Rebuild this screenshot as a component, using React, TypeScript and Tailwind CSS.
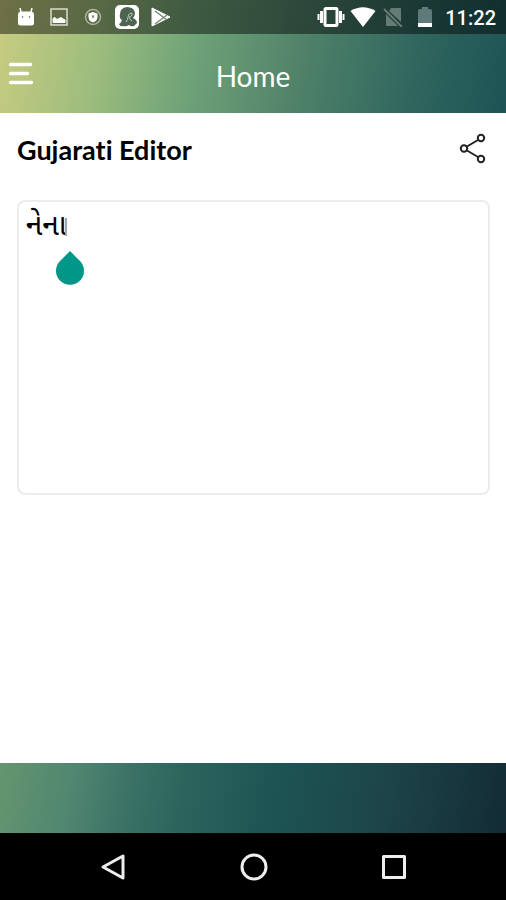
import { useState } from 'react';

function StatusBar() {
  return (
    <div className="flex h-[34px] items-center justify-between bg-black/45 pr-[10px] pl-[17px] text-white">
      <div className="flex items-center gap-[14px]">
        <svg className="h-5 w-[18px]" viewBox="0 0 18 20" fill="currentColor">
          <path d="M1 7.5Q1 5 3.5 4.5h11Q17 5 17 7.5V16q0 2.500-2.500 2.500h-11Q1 18.500 1 16z" />
          <path d="M4 5 3 1M14 5l1-4" stroke="currentColor" strokeWidth="1.500" />
          <circle cx="5.500" cy="10" r=".8" fill="#53593f" />
          <circle cx="12.500" cy="10" r=".8" fill="#53593f" />
        </svg>
        <svg className="h-5 w-5" viewBox="0 0 20 20" fill="none" stroke="#dcdcd0" strokeWidth="1.500">
          <path d="M2 2h16v16H2z" />
          <path d="M4 15.500v-4l2-1 2 2 4-2 2 1.500 2 1v2.500z" fill="#fff" stroke="#fff" strokeWidth="1" />
        </svg>
        <svg className="h-5 w-5" viewBox="0 0 20 20" fill="none">
          <circle cx="10" cy="10" r="7.500" stroke="#a9b49c" strokeWidth="1.500" />
          <path d="M10 5 14.500 6.500V10q0 4-4.500 5.500Q5.500 14 5.500 10V6.500z" fill="#fff" />
          <path d="M8.500 8.500h3L10 12z" fill="#7b8768" />
        </svg>
        <svg className="-ml-[3px] h-[26px] w-[26px]" viewBox="0 0 26 26">
          <rect x="1" y="1" width="24" height="24" rx="5" fill="#fff" />
          <path
            d="M6 10q0-6 7-7 7 0 8 6 0 3-2 5 4 2 4 5l-3 3q-3 1-5-1-3 2-6 1-3 1-4-2 2-1 3-4-3-1-2-6z"
            fill="#4d6550"
          />
          <path d="M12 18q2-2 2-5t3-4q2 0 1 2-1 2-3 2 1 3 3 4" fill="none" stroke="#b9c6b8" strokeWidth="1" />
        </svg>
        <svg className="-ml-[3px] h-5 w-5" viewBox="0 0 20 20">
          <path d="M1 1 19 10 1 19z" fill="#fff" stroke="#fff" strokeLinejoin="round" />
          <path d="m4 4 12 9M4 17l12-9" fill="none" stroke="#6e8871" strokeWidth="1.300" />
        </svg>
      </div>

      <div className="flex items-center">
        <svg className="h-5 w-7" viewBox="0 0 28 20" fill="none" stroke="#fff">
          <rect x="8" y="1.500" width="12" height="17" rx="1" strokeWidth="3" />
          <path d="M4.500 4v12M23.500 4v12" strokeWidth="3" />
          <path d="M1.500 7v6M26.500 7v6" strokeWidth="2" />
        </svg>
        <svg className="ml-[5px] h-5 w-[26px]" viewBox="0 0 26 20" fill="#fff">
          <path d="M.5 4Q13-3.500 25.500 4L13 20z" />
        </svg>
        <svg className="ml-[7px] h-5 w-5" viewBox="0 0 20 20" fill="#657c76">
          <path d="M8 1h9q1 0 1 1v13L6 4zM3 7l12 12H4q-1 0-1-1z" />
          <path d="m1 2 18 18" stroke="#657c76" strokeWidth="2" />
        </svg>
        <svg className="ml-[14px] h-5 w-4" viewBox="0 0 16 20">
          <path d="M5 0h6v2h2q2 0 2 2v12H1V4q0-2 2-2h2z" fill="#60797a" />
          <path d="M1 16h14v4H1z" fill="#fff" />
        </svg>
        <span className="ml-[12px] pt-px font-['Roboto',sans-serif] text-[20px] leading-6 font-medium">11:22</span>
      </div>
    </div>
  );
}

function Header() {
  return (
    <header className="bg-[linear-gradient(100deg,#c9cc80_0%,#9dbd7d_20%,#70a378_38%,#4f8169_60%,#30665e_81%,#1d5354_100%)]">
      <StatusBar />
      <div className="grid h-[79px] grid-cols-[1fr_auto_1fr] items-center px-2">
        <button type="button" aria-label="Menu" className="w-[26px] text-white">
          <svg className="h-[26px] w-[26px]" viewBox="0 0 26 26" fill="none" stroke="currentColor" strokeWidth="3.500" strokeLinecap="round">
            <path d="M2.500 3.500h20M2.500 12.500h17M2.500 21.500h21" />
          </svg>
        </button>
        <h1 className="pt-1 font-['Lato',sans-serif] text-[28px] leading-8 text-white">Home</h1>
      </div>
    </header>
  );
}

function Editor() {
  const [text, setText] = useState('નેના');

  return (
    <main className="flex-1 bg-white pr-4 pl-[17px]">
      <div className="flex h-[87px] items-start justify-between pt-5">
        <label
          htmlFor="editor"
          className="pt-px font-['Lato',sans-serif] text-[27px] leading-8 font-bold text-black [font-variant-ligatures:none]"
        >
          Gujarati Editor
        </label>
        <button type="button" aria-label="Share" className="text-[#222]">
          <svg className="h-8 w-8" viewBox="0 0 32 32" fill="none" stroke="currentColor" strokeWidth="2">
            <circle cx="6" cy="15.500" r="3.200" />
            <circle cx="23" cy="5" r="3.200" />
            <circle cx="23" cy="26" r="3.200" />
            <path d="m9 13.500 11-6.500M9 17.500l11 6.500" />
          </svg>
        </button>
      </div>
      <div className="relative">
        <textarea
          id="editor"
          value={text}
          onChange={(e) => setText(e.target.value)}
          className="block h-[295px] w-full resize-none rounded-lg border-2 border-[#ececec] px-[7px] py-[10px] font-['Noto_Sans_Gujarati','Noto_Sans',sans-serif] text-[30px] leading-8 text-black outline-none"
        />
        {/* text cursor */}
        <span className="absolute top-[18px] left-[48px] h-[18px] w-[2px] bg-[#a5a5a5]" />
        {/* cursor handle */}
        <svg className="absolute top-[50px] left-[38px] h-[36px] w-[30px]" viewBox="0 0 30 36" fill="#009688">
          <path d="M15 1 25 11a14 14 0 1 1-20 0z" />
        </svg>
      </div>
    </main>
  );
}

function NavigationBar() {
  return (
    <nav className="flex h-[67px] items-center justify-around bg-black pr-[42px] pl-11 text-[#eee]">
      <button type="button" aria-label="Back">
        <svg className="h-7 w-7" viewBox="0 0 28 28" fill="none" stroke="currentColor" strokeWidth="3" strokeLinejoin="round">
          <path d="M3 14 23 3v22z" />
        </svg>
      </button>
      <button type="button" aria-label="Home">
        <svg className="h-7 w-7" viewBox="0 0 28 28" fill="none" stroke="currentColor" strokeWidth="3">
          <circle cx="14" cy="14" r="12" />
        </svg>
      </button>
      <button type="button" aria-label="Overview">
        <svg className="h-7 w-7" viewBox="0 0 28 28" fill="none" stroke="currentColor" strokeWidth="3" strokeLinejoin="round">
          <path d="M3.500 3.500h21v21h-21z" />
        </svg>
      </button>
    </nav>
  );
}

export default function App() {
  return (
    <div className="flex min-h-screen flex-col">
      <Header />
      <Editor />
      <footer className="h-[70px] bg-[linear-gradient(100deg,#64966f_0%,#508570_15%,#3c7366_25%,#2a625c_38%,#1d5554_53%,#1d4549_75%,#132b35_100%)]" />
      <NavigationBar />
    </div>
  );
}
